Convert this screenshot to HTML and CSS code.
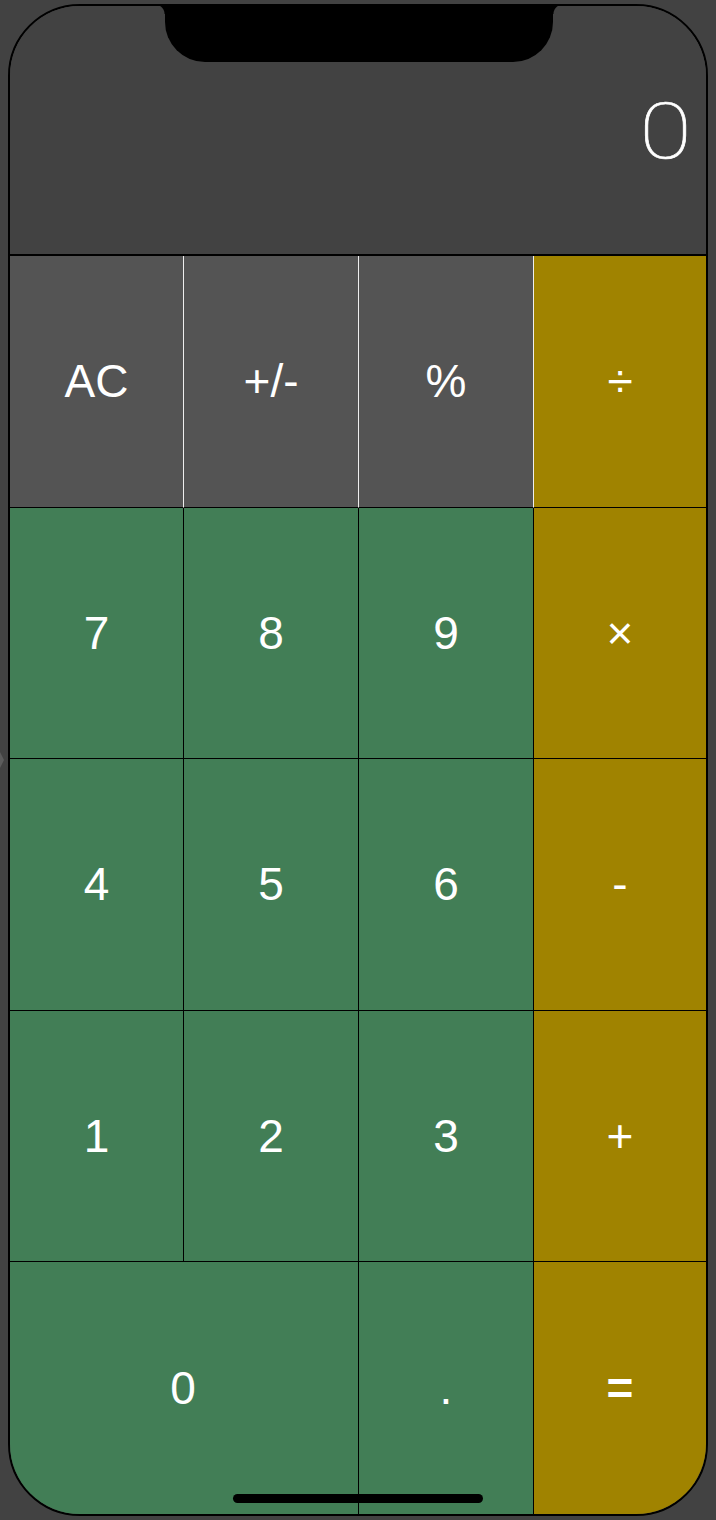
FILE: index.html
```html
<!DOCTYPE html>
<html>
<head>
<meta charset="utf-8">
<link rel="stylesheet" href="styles.css">
</head>
<body>
<div class="edge-arrow"></div>
<div class="phone">
  <div class="notch"></div>
  <div class="display"><span class="value">0</span></div>
  <div class="keys">
    <div class="key fn">AC</div>
    <div class="key fn">+/-</div>
    <div class="key fn">%</div>
    <div class="key op top">÷</div>
    <div class="key num">7</div>
    <div class="key num">8</div>
    <div class="key num">9</div>
    <div class="key op">×</div>
    <div class="key num">4</div>
    <div class="key num">5</div>
    <div class="key num">6</div>
    <div class="key op">-</div>
    <div class="key num">1</div>
    <div class="key num">2</div>
    <div class="key num">3</div>
    <div class="key op">+</div>
    <div class="key num zero">0</div>
    <div class="key num">.</div>
    <div class="key op eq">=</div>
  </div>
  <div class="home"></div>
</div>
</body>
</html>
```

FILE: styles.css
```css
html, body {
  margin: 0;
  padding: 0;
  background: #424242;
  width: 716px;
  height: 1520px;
  overflow: hidden;
  font-family: "Liberation Sans", Arial, sans-serif;
}

.edge-arrow {
  position: absolute;
  left: 0;
  top: 752px;
  width: 0;
  height: 0;
  border-top: 8px solid transparent;
  border-bottom: 8px solid transparent;
  border-left: 4px solid #5c5c5c;
}

.phone {
  position: relative;
  box-sizing: border-box;
  margin: 4px 0 0 8px;
  width: 700px;
  height: 1512px;
  border: 2px solid #000;
  border-radius: 72px;
  overflow: hidden;
  display: flex;
  flex-direction: column;
  background: #424242;
}

.notch {
  position: absolute;
  top: -2px;
  left: 155px;
  width: 388px;
  height: 58px;
  background: #000;
  border-radius: 0 0 40px 40px;
}
.notch::before,
.notch::after {
  content: "";
  position: absolute;
  top: 0;
  width: 10px;
  height: 10px;
}
.notch::before {
  left: -10px;
  background: radial-gradient(circle at 0 100%, transparent 9px, #000 10px);
}
.notch::after {
  right: -10px;
  background: radial-gradient(circle at 100% 100%, transparent 9px, #000 10px);
}

.display {
  height: 248px;
  border-bottom: 2px solid #000;
  background: #424242;
  display: flex;
  align-items: center;
  justify-content: flex-end;
  padding-right: 14px;
  flex: none;
}

.value {
  font-family: Roboto, "Liberation Sans", sans-serif;
  font-weight: 100;
  font-size: 78px;
  color: #fff;
  line-height: 1;
  margin-top: 4px;
  transform: scaleX(1.22);
  transform-origin: right center;
  -webkit-text-stroke: 0.6px #fff;
}

.keys {
  flex: 1;
  display: grid;
  grid-template-columns: 174px 175px 175px 1fr;
  grid-template-rows: repeat(5, 1fr);
}

.key {
  box-sizing: border-box;
  display: flex;
  align-items: center;
  justify-content: center;
  color: #fff;
  font-size: 46px;
  border-right: 1px solid #000;
  border-bottom: 1px solid #000;
}

.key:nth-child(4n) {
  border-right: none;
}

.fn {
  background: #545454;
  border-right-color: #eee;
}

.num {
  background: #427e56;
}

.op {
  background: #a08300;
}

.zero {
  grid-column: span 2;
  padding-right: 2px;
}

.eq {
  font-weight: bold;
  border-right: none;
  border-bottom: none;
}

.key:nth-last-child(-n+3) {
  border-bottom: none;
}

.home {
  position: absolute;
  left: 223px;
  bottom: 11px;
  width: 250px;
  height: 9px;
  border-radius: 5px;
  background: #000;
}
```
